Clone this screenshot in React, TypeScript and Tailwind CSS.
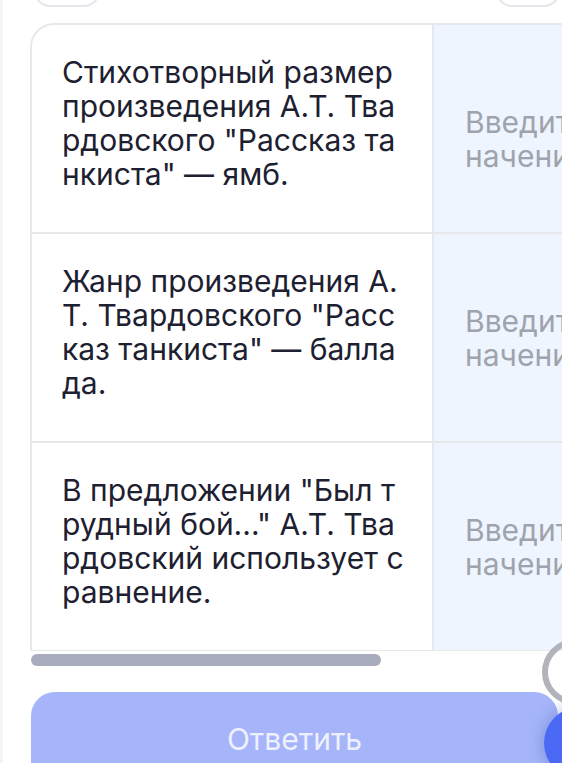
import React from 'react';

const rows = [
  'Стихотворный размер произведения А.Т. Твардовского "Рассказ танкиста" — ямб.',
  'Жанр произведения А.Т. Твардовского "Рассказ танкиста" — баллада.',
  'В предложении "Был трудный бой..." А.Т. Твардовский использует сравнение.',
];

export default function App() {
  return (
    <div
      className="relative min-h-screen w-full overflow-hidden bg-white flex"
      style={{ fontFamily: 'Inter, "Noto Sans", sans-serif' }}
    >
      <div className="w-[3px] shrink-0 self-stretch bg-[#f4f5f7]" />

      <main className="flex-1 min-w-0 pl-[27px] flex flex-col">
        {/* top buttons, mostly scrolled out of view */}
        <div className="flex justify-between pl-[4px] pr-[2px] -mt-[33px]">
          <div className="h-[40px] w-[66px] rounded-[16px] border-2 border-[#e4e5ea] bg-white" />
          <div className="h-[40px] w-[64px] rounded-[16px] border-2 border-[#e4e5ea] bg-white" />
        </div>

        {/* horizontally scrolled table */}
        <div className="mt-[16px] overflow-hidden">
          <div className="w-[804px] rounded-tl-[24px] border-l-2 border-t-2 border-[#e6e8ec]">
            {rows.map((text, i) => (
              <div
                key={i}
                className={`flex ${i < rows.length - 1 ? 'border-b-2' : 'border-b'} border-[#e6e8ec]`}
              >
                <div className="w-[402px] min-h-[207px] shrink-0 border-r-2 border-[#e6e8ec] pl-[30px] pr-[26px] pt-[30px] text-[30px] leading-[34px] text-[#1d2030] break-all">
                  {text}
                </div>
                <div
                  className={`flex-1 bg-[#eef5fe] flex items-center pl-[31px] text-[30px] leading-[34px] text-[#9fa3ad] ${i === 0 ? 'pt-[20px]' : ''}`}
                >
                  <div className="whitespace-nowrap">
                    <div>Введите з</div>
                    <div>начение</div>
                  </div>
                </div>
              </div>
            ))}
          </div>
        </div>

        {/* scroll thumb */}
        <div className="mt-[3px] ml-[1px] h-[12px] w-[350px] rounded-full bg-[#a9acbd]" />

        <button className="mt-[26px] ml-[1px] mr-[4px] h-[94px] rounded-[24px] bg-[#a6b5f9] text-[30px] text-[#eef1fd] flex items-center justify-center">
          Ответить
        </button>
      </main>

      {/* floating controls at the bottom right */}
      <div className="absolute left-[542px] top-[639px] h-[66px] w-[66px] rounded-full border-[6px] border-[#b3b4bb]" />
      <div className="absolute left-[544px] top-[707px] h-[72px] w-[72px] rounded-full bg-[#4a6af5] shadow-[0_0_16px_rgba(40,60,160,0.35)]" />
    </div>
  );
}
